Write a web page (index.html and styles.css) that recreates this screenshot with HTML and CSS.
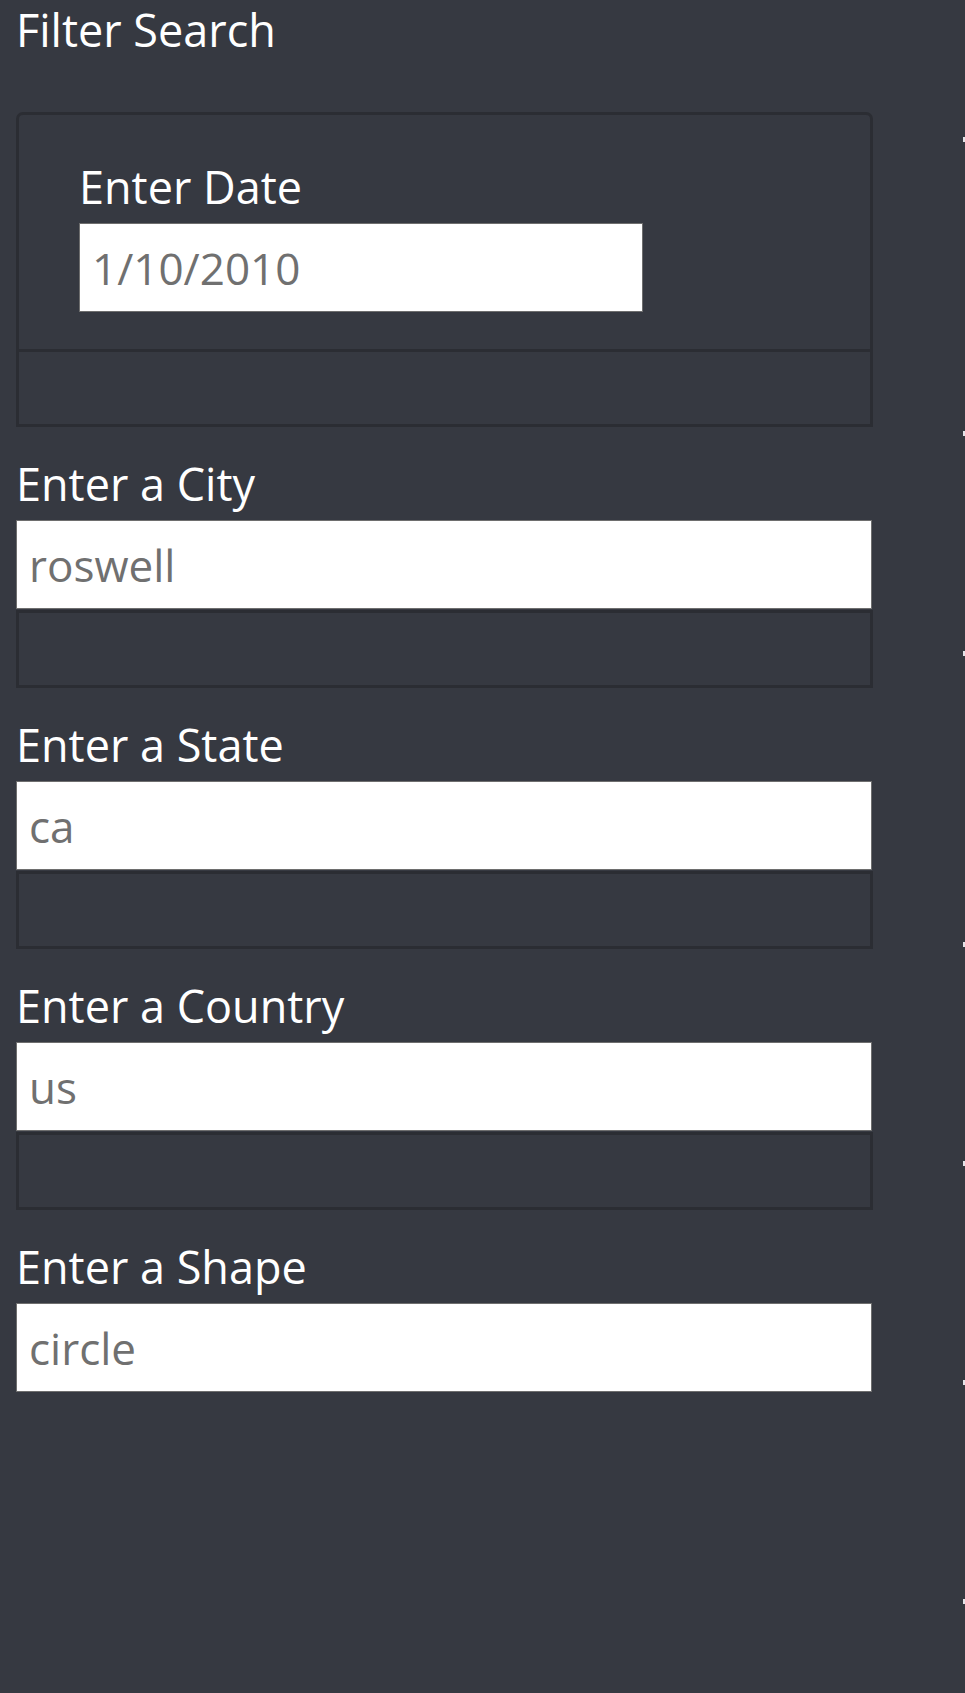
FILE: index.html
```html
<!DOCTYPE html>
<html lang="en">
<head>
<meta charset="utf-8">
<title>Filter Search</title>
<link rel="stylesheet" href="styles.css">
</head>
<body>
<div class="page">
  <main class="filters">
    <h1 class="title">Filter Search</h1>
    <div class="panel">
      <div class="panel-body">
        <label class="label" for="date">Enter Date</label>
        <input class="input input-date" id="date" type="text" value="1/10/2010">
      </div>
      <div class="panel-footer"></div>
    </div>
    <div class="field">
      <label class="label" for="city">Enter a City</label>
      <input class="input" id="city" type="text" value="roswell">
      <div class="well"></div>
    </div>
    <div class="field">
      <label class="label" for="state">Enter a State</label>
      <input class="input" id="state" type="text" value="ca">
      <div class="well"></div>
    </div>
    <div class="field">
      <label class="label" for="country">Enter a Country</label>
      <input class="input" id="country" type="text" value="us">
      <div class="well"></div>
    </div>
    <div class="field">
      <label class="label" for="shape">Enter a Shape</label>
      <input class="input" id="shape" type="text" value="circle">
    </div>
  </main>
  <aside class="edge">
    <span class="tick t1"></span>
    <span class="tick t2"></span>
    <span class="tick t3"></span>
    <span class="tick t4"></span>
    <span class="tick t5"></span>
    <span class="tick t6"></span>
    <span class="tick t7"></span>
  </aside>
</div>
</body>
</html>
```

FILE: styles.css
```css
html, body {
  margin: 0;
  padding: 0;
  background: #363941;
}
body {
  width: 965px;
  min-height: 1693px;
  overflow: hidden;
  font-family: "Open Sans", "Noto Sans", sans-serif;
  color: #ffffff;
}
.page {
  display: flex;
  align-items: flex-start;
}
.filters {
  width: 857px;
  margin-left: 16px;
  display: flex;
  flex-direction: column;
}
.title {
  margin: 0 0 52px 0;
  font-weight: 400;
  font-size: 45px;
  line-height: 60px;
  color: #ffffff;
}
.label {
  display: block;
  font-size: 45px;
  line-height: 60px;
  margin-bottom: 6px;
  color: #ffffff;
}
.panel {
  border: 3px solid #2b2d33;
  border-radius: 7px 7px 0 0;
}
.panel-body {
  padding: 42px 0 37px 60px;
}
.panel-footer {
  border-top: 3px solid #2b2d33;
  height: 72px;
}
.input {
  display: block;
  box-sizing: border-box;
  width: 856px;
  height: 89px;
  margin: 0;
  padding: 0 12px;
  border: 1px solid #6e6e6e;
  border-radius: 0;
  background: #ffffff;
  font-family: "Open Sans", "Noto Sans", sans-serif;
  font-size: 44px;
  color: #707070;
  outline: none;
}
.input-date {
  width: 564px;
}
.field {
  margin-top: 27px;
}
.well {
  box-sizing: border-box;
  width: 857px;
  height: 78px;
  margin-top: 1px;
  border: 3px solid #2b2d33;
}
.edge {
  margin-left: auto;
  width: 2px;
  display: flex;
  flex-direction: column;
}
.tick {
  display: block;
  width: 2px;
  height: 5px;
  background: #e2e3e8;
}
.t1 { margin-top: 137px; }
.t2 { margin-top: 289px; }
.t3 { margin-top: 215px; }
.t4 { margin-top: 286px; }
.t5 { margin-top: 214px; }
.t6 { margin-top: 214px; }
.t7 { margin-top: 214px; }
```
